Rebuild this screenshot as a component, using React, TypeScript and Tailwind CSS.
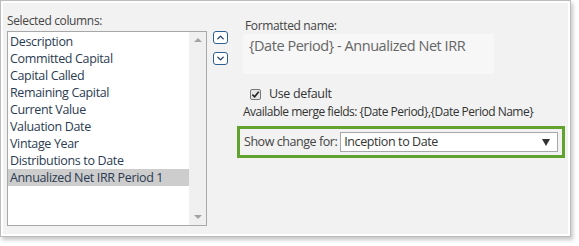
import { ChevronUp, ChevronDown } from 'lucide-react';

const columns = [
  'Description',
  'Committed Capital',
  'Capital Called',
  'Remaining Capital',
  'Current Value',
  'Valuation Date',
  'Vintage Year',
  'Distributions to Date',
  'Annualized Net IRR Period 1',
];

const App = () => {
  return (
    <div className="w-[579px] h-[246px] bg-white" style={{ fontFamily: '"Open Sans", "Noto Sans", sans-serif' }}>
      <div className="w-[571px] h-[237px] border border-[#bcbcbc] bg-white p-[2px] shadow-[2px_3px_4px_rgba(0,0,0,0.22)]">
        <div className="h-full bg-[#f2f2f2] flex">
          {/* left: selected columns */}
          <div className="ml-[4px] mt-[10px] flex flex-col">
            <div className="text-[12px] leading-[16px] text-[#444] tracking-[-0.35px]">Selected columns:</div>
            <div className="mt-[2px] w-[200px] h-[195px] border border-[#a8a8a8] bg-white flex">
              <div className="flex-1 pt-[1px]">
                {columns.map((c, i) => (
                  <div
                    key={c}
                    className={`h-[17px] pl-[2px] text-[12.5px] leading-[17px] text-[#2b3b52] tracking-[-0.35px] whitespace-nowrap ${
                      i === columns.length - 1 ? 'bg-[#cdcdcd]' : ''
                    }`}
                  >
                    {c}
                  </div>
                ))}
              </div>
              <div className="w-[17px] bg-[#f0f0f0] flex flex-col justify-between items-center py-[6px]">
                <div className="w-0 h-0 border-l-[4px] border-r-[4px] border-b-[4px] border-l-transparent border-r-transparent border-b-[#a3a3a3]" />
                <div className="w-0 h-0 border-l-[4px] border-r-[4px] border-t-[4px] border-l-transparent border-r-transparent border-t-[#a3a3a3]" />
              </div>
            </div>
          </div>

          {/* up / down buttons */}
          <div className="ml-[6px] mt-[28px] flex flex-col gap-[8px]">
            <div className="w-[15px] h-[13px] rounded-[3px] border border-[#2f5f8f] bg-white flex items-center justify-center">
              <ChevronUp className="w-[11px] h-[11px] text-[#1f3f66]" strokeWidth={3} />
            </div>
            <div className="w-[15px] h-[13px] rounded-[3px] border border-[#2f5f8f] bg-white flex items-center justify-center">
              <ChevronDown className="w-[11px] h-[11px] text-[#1f3f66]" strokeWidth={3} />
            </div>
          </div>

          {/* right: formatting */}
          <div className="ml-[9px] mt-[15px] w-[328px] flex flex-col">
            <div className="pl-[8px] text-[12px] leading-[16px] text-[#444] tracking-[-0.35px]">Formatted name:</div>
            <div className="ml-[6px] mt-[0px] w-[251px] h-[40px] bg-[#f7f7f7] pl-[6px] pt-[2px] text-[14.5px] leading-[20px] text-[#666] tracking-[-0.45px]">
              {'{Date Period} - Annualized Net IRR'}
            </div>
            <div className="ml-[13px] mt-[12px] flex items-center gap-[8px]">
              <div className="w-[11px] h-[11px] border border-[#777] bg-[#e6e6e6] rounded-[2px] flex items-center justify-center">
                <svg viewBox="0 0 10 10" className="w-[9px] h-[9px]">
                  <path d="M1.5 5.2 L4 7.6 L8.6 2" fill="none" stroke="#222" strokeWidth="1.8" />
                </svg>
              </div>
              <span className="text-[12.5px] leading-[16px] text-[#333] tracking-[-0.35px]">Use default</span>
            </div>
            <div className="ml-[6px] mt-[2px] text-[12px] leading-[16px] text-[#333] tracking-[-0.5px] whitespace-nowrap">
              {'Available merge fields: {Date Period},{Date Period Name}'}
            </div>
            <div className="mt-[6px] h-[32px] border-[3px] border-[#62a330] flex items-center pl-[4px] pr-[4px]">
              <span className="text-[12.5px] text-[#444] tracking-[-0.45px] whitespace-nowrap">Show change for:</span>
              <div className="ml-[3px] flex-1 h-[20px] border border-[#a8a8a8] bg-white flex items-center pl-[3px] pr-[7px]">
                <span className="flex-1 text-[12.5px] leading-[18px] text-[#333] tracking-[-0.4px]">Inception to Date</span>
                <div className="w-0 h-0 border-l-[4px] border-r-[4px] border-t-[7px] border-l-transparent border-r-transparent border-t-[#333]" />
              </div>
            </div>
          </div>
        </div>
      </div>
    </div>
  );
};

export default App;
